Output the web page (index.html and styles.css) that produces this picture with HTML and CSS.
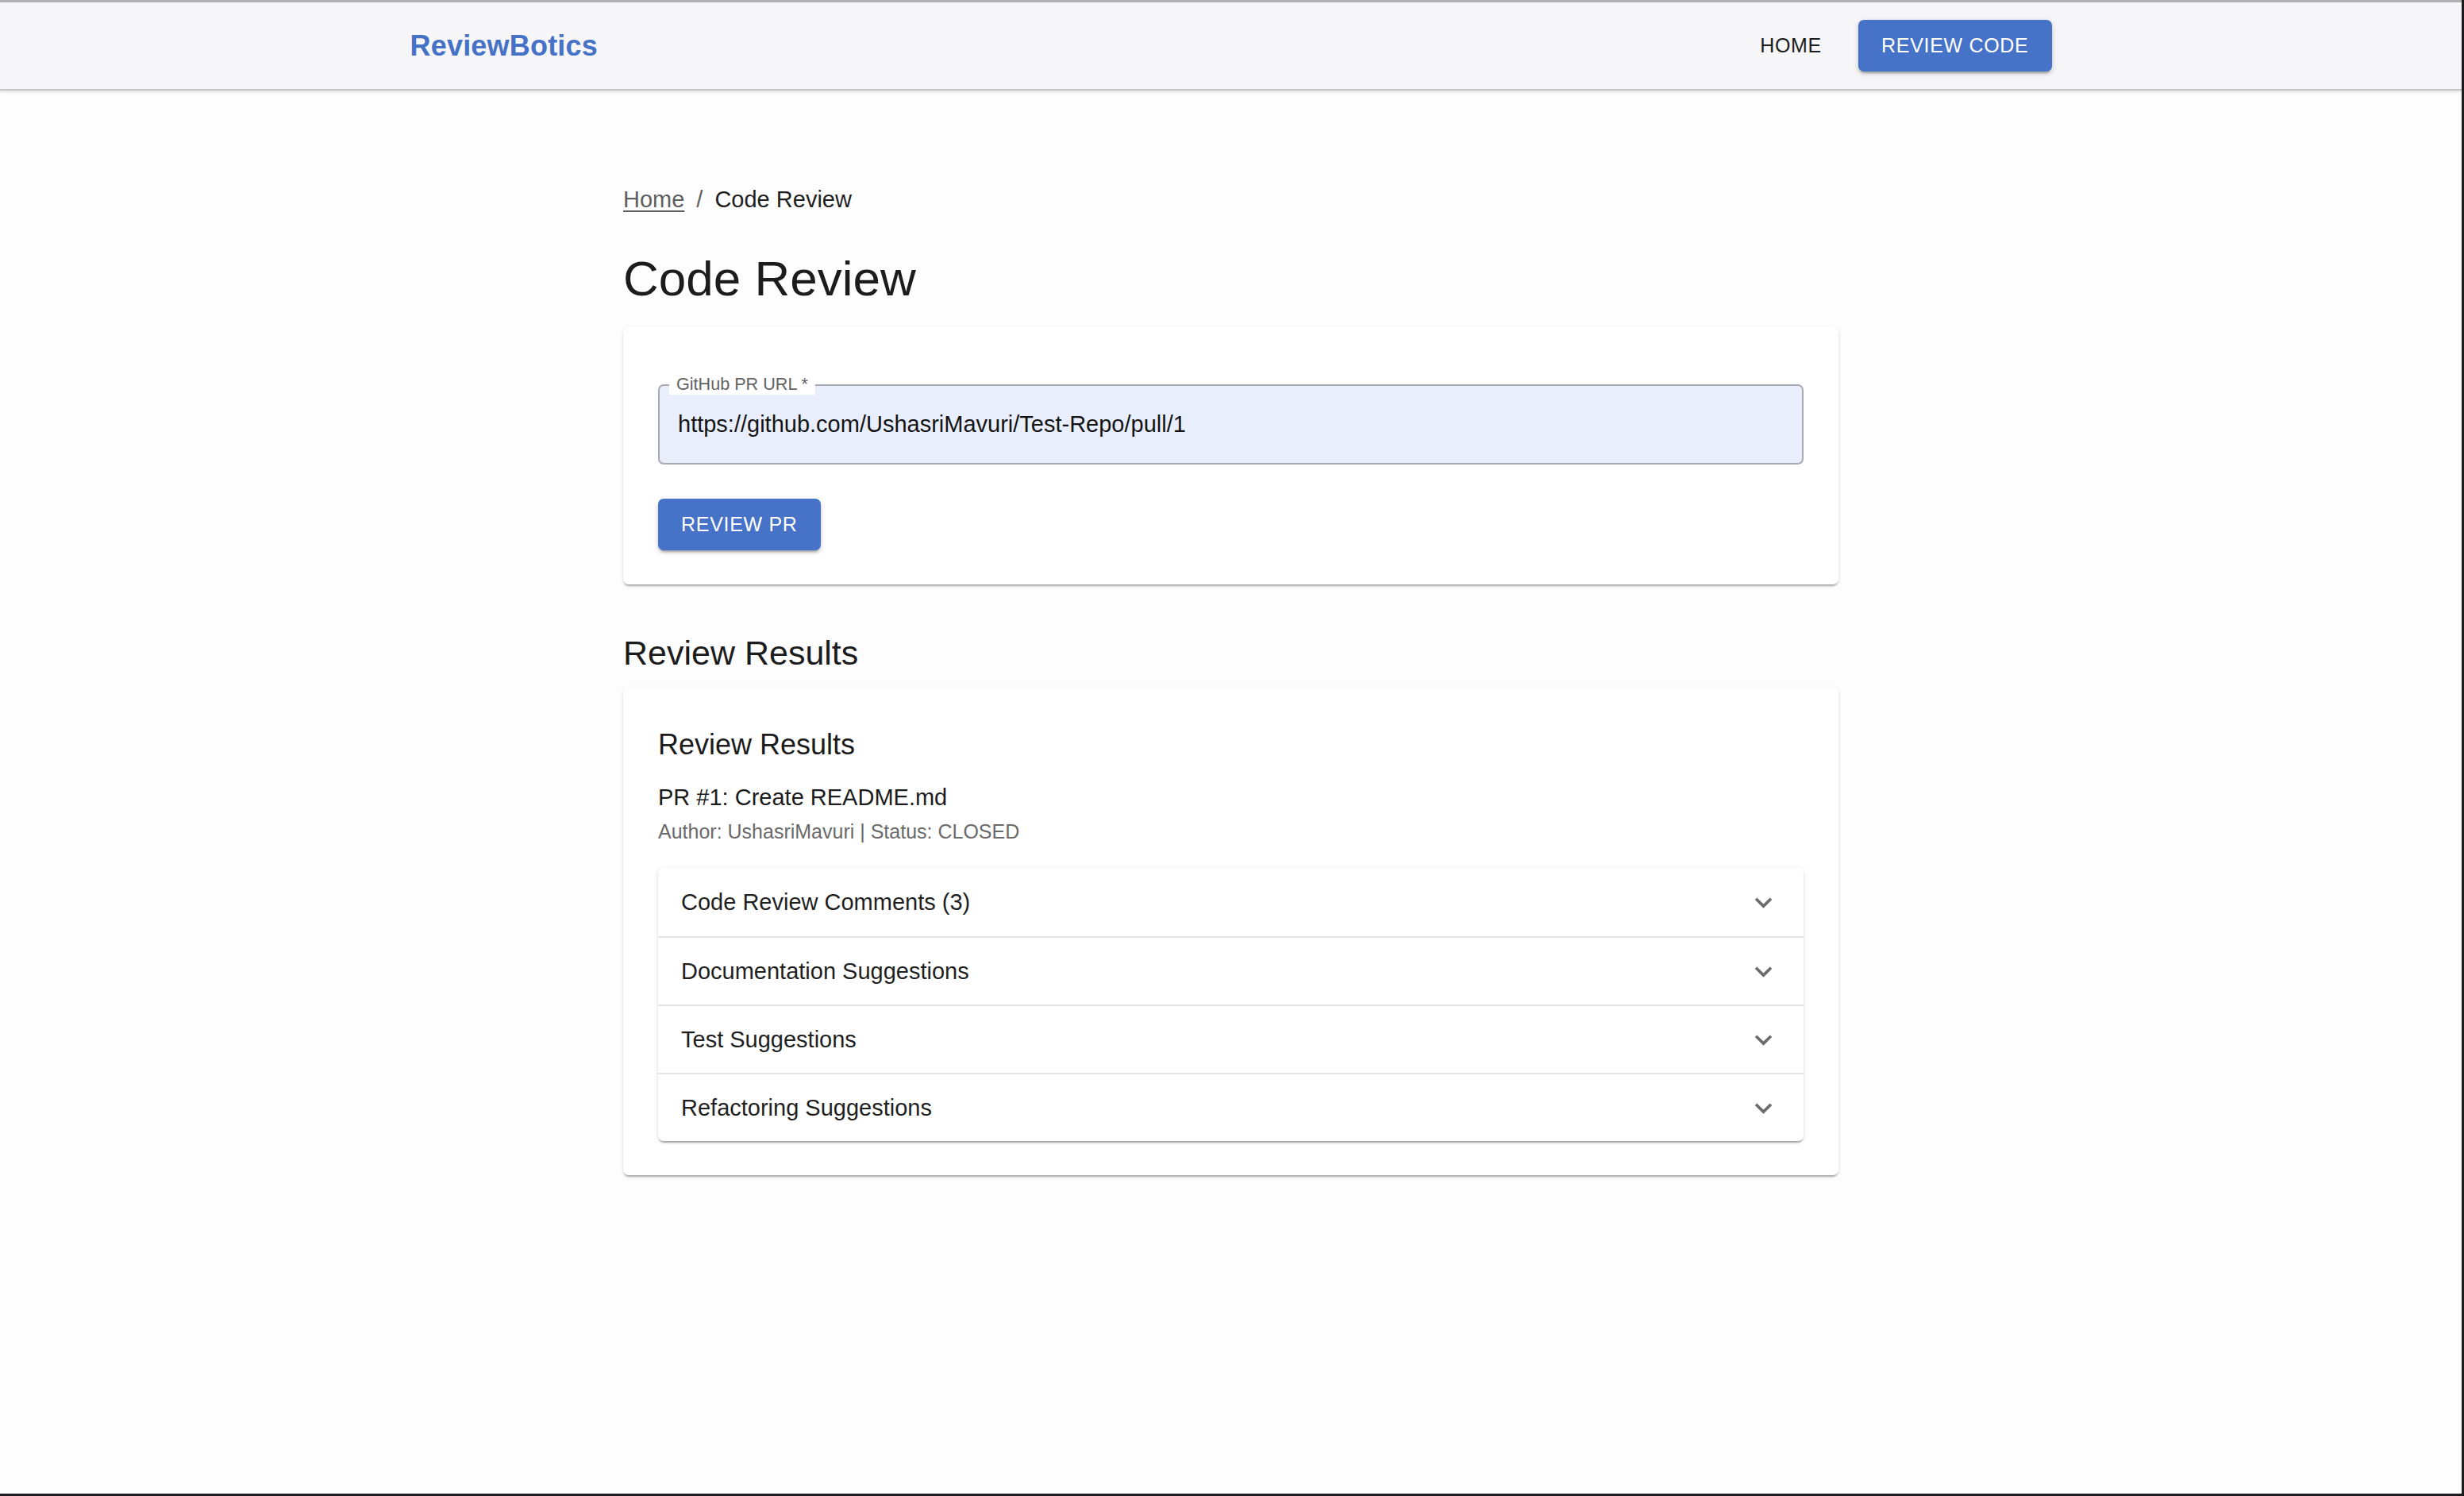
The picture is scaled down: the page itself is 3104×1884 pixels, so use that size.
FILE: index.html
```html
<!DOCTYPE html>
<html lang="en">
<head>
<meta charset="utf-8">
<title>ReviewBotics - Code Review</title>
<link rel="stylesheet" href="styles.css">
</head>
<body>
<header class="appbar">
  <div class="toolbar">
    <div class="logo">ReviewBotics</div>
    <nav class="nav">
      <a class="nav-link">HOME</a>
      <a class="btn btn-contained">REVIEW CODE</a>
    </nav>
  </div>
</header>
<main class="page">
  <nav class="breadcrumbs">
    <a class="crumb-link">Home</a><span class="crumb-sep">/</span><span class="crumb-current">Code Review</span>
  </nav>
  <h1 class="page-title">Code Review</h1>
  <section class="card form-card">
    <div class="field">
      <span class="field-label">GitHub PR URL *</span>
      <div class="field-input">https://github.com/UshasriMavuri/Test-Repo/pull/1</div>
    </div>
    <div class="actions">
      <button class="btn btn-contained">REVIEW PR</button>
    </div>
  </section>
  <h2 class="section-title">Review Results</h2>
  <section class="card results-card">
    <h3 class="results-title">Review Results</h3>
    <p class="pr-title">PR #1: Create README.md</p>
    <p class="pr-meta">Author: UshasriMavuri | Status: CLOSED</p>
    <div class="accordion">
      <div class="acc-row"><span class="acc-text">Code Review Comments (3)</span><svg class="chev" viewBox="0 0 24 24"><path d="M16.59 8.59 12 13.17 7.41 8.59 6 10l6 6 6-6z"/></svg></div>
      <div class="acc-row"><span class="acc-text">Documentation Suggestions</span><svg class="chev" viewBox="0 0 24 24"><path d="M16.59 8.59 12 13.17 7.41 8.59 6 10l6 6 6-6z"/></svg></div>
      <div class="acc-row"><span class="acc-text">Test Suggestions</span><svg class="chev" viewBox="0 0 24 24"><path d="M16.59 8.59 12 13.17 7.41 8.59 6 10l6 6 6-6z"/></svg></div>
      <div class="acc-row"><span class="acc-text">Refactoring Suggestions</span><svg class="chev" viewBox="0 0 24 24"><path d="M16.59 8.59 12 13.17 7.41 8.59 6 10l6 6 6-6z"/></svg></div>
    </div>
  </section>
</main>
</body>
</html>
```
FILE: styles.css
```css
html {
  background: #1c1c1e;
  height: 100%;
}
body {
  margin: 0 3px 3px 0;
  min-height: calc(100vh - 3px);
  background: #fdfdfd;
  font-family: "Liberation Sans", Arial, Helvetica, sans-serif;
  color: #212121;
}
.appbar {
  border-top: 3px solid #b0b0b3;
  border-bottom: 2px solid #c6c6c9;
  background: #f6f5f8;
  box-shadow: 0 2px 3px rgba(0, 0, 0, 0.12);
}
.toolbar {
  width: 2068px;
  height: 109px;
  margin: 0 auto;
  display: flex;
  align-items: center;
  justify-content: space-between;
}
.logo {
  font-size: 36px;
  font-weight: 700;
  color: #4571c6;
  letter-spacing: 0.2px;
}
.nav {
  display: flex;
  align-items: center;
  gap: 46px;
}
.nav-link {
  font-size: 25px;
  letter-spacing: 0.7px;
  color: #1c1c1c;
}
.btn {
  display: inline-flex;
  align-items: center;
  justify-content: center;
  box-sizing: border-box;
  height: 65px;
  padding: 0 29px;
  border: none;
  border-radius: 7px;
  font-family: "Liberation Sans", Arial, Helvetica, sans-serif;
  font-size: 25px;
  letter-spacing: 0.7px;
  cursor: pointer;
}
.btn-contained {
  background: #4672c8;
  color: #ffffff;
  box-shadow: 0 5px 2px -3px rgba(0, 0, 0, 0.2), 0 3px 4px 0 rgba(0, 0, 0, 0.14), 0 2px 9px 0 rgba(0, 0, 0, 0.1);
}
.page {
  width: 1531px;
  margin: 0 auto;
  padding-top: 116px;
  padding-bottom: 60px;
}
.breadcrumbs {
  font-size: 29px;
  line-height: 43px;
  display: flex;
  align-items: center;
}
.crumb-link {
  color: #5f5f5f;
  text-decoration: underline;
  text-decoration-thickness: 2px;
  text-underline-offset: 4px;
}
.crumb-sep {
  color: #5f5f5f;
  margin: 0 15px;
}
.crumb-current {
  color: #1f1f1f;
}
.page-title {
  font-size: 62px;
  font-weight: 400;
  line-height: 75px;
  margin: 40px 0 24px;
  color: #1c1c1c;
}
.card {
  background: #ffffff;
  border-radius: 7px;
  padding: 43px 44px;
  box-shadow: 0 4px 2px -2px rgba(0, 0, 0, 0.2), 0 2px 2px 0 rgba(0, 0, 0, 0.12), 0 2px 6px 0 rgba(0, 0, 0, 0.08);
}
.field {
  position: relative;
  margin-top: 29px;
}
.field-label {
  position: absolute;
  left: 14px;
  top: -13px;
  padding: 0 9px;
  background: #ffffff;
  font-size: 21.6px;
  line-height: 26px;
  color: #636363;
}
.field-input {
  box-sizing: border-box;
  height: 101px;
  border: 2px solid #a8aab1;
  border-radius: 7px;
  background: #e9eefc;
  padding: 0 23px;
  display: flex;
  align-items: center;
  font-size: 29px;
  color: #141414;
}
.actions {
  margin-top: 43px;
}
.section-title {
  font-size: 43px;
  font-weight: 400;
  line-height: 57px;
  margin: 58px 0 14px;
  color: #1c1c1c;
}
.results-title {
  font-size: 36px;
  font-weight: 400;
  line-height: 58px;
  margin: 1px 0 12px;
  color: #1c1c1c;
}
.pr-title {
  font-size: 29px;
  line-height: 50px;
  margin: 0;
  color: #1c1c1c;
}
.pr-meta {
  font-size: 25px;
  line-height: 36px;
  margin: 0;
  color: #6a6a6a;
}
.accordion {
  margin-top: 28px;
  border-radius: 7px;
  background: #ffffff;
  box-shadow: 0 4px 2px -2px rgba(0, 0, 0, 0.22), 0 2px 2px 0 rgba(0, 0, 0, 0.12), 0 1px 6px 0 rgba(0, 0, 0, 0.1);
}
.acc-row {
  box-sizing: border-box;
  height: 86px;
  padding: 0 29px 0 29px;
  display: flex;
  align-items: center;
  justify-content: space-between;
}
.acc-row + .acc-row {
  border-top: 2px solid #e3e3e5;
}
.acc-text {
  font-size: 29px;
  color: #1f1f1f;
}
.chev {
  width: 43px;
  height: 43px;
  fill: #6b6b6b;
}
```
